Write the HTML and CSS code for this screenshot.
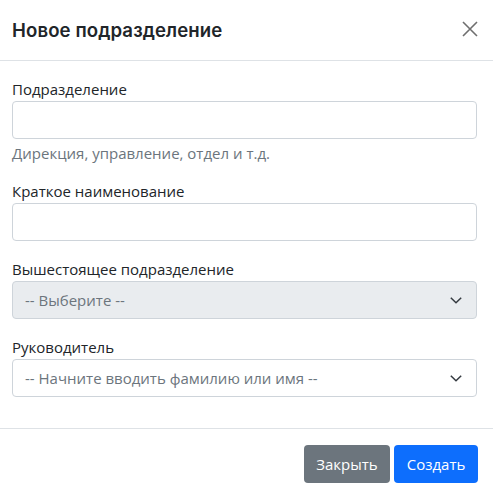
FILE: index.html
```html
<!DOCTYPE html>
<html lang="ru">
<head>
<meta charset="utf-8">
<title>Новое подразделение</title>
<link rel="stylesheet" href="styles.css">
</head>
<body>
<div class="modal">
  <div class="modal-header">
    <h5 class="modal-title">Новое подразделение</h5>
    <button class="btn-close" type="button" aria-label="Закрыть">
      <svg width="16" height="16" viewBox="0 0 16 16"><path d="M1 1L15 15M15 1L1 15" stroke="#6f6f6f" stroke-width="1.6" fill="none"/></svg>
    </button>
  </div>
  <div class="modal-body">
    <div class="group">
      <label class="label">Подразделение</label>
      <div class="control"></div>
      <div class="form-text">Дирекция, управление, отдел и т.д.</div>
    </div>
    <div class="group">
      <label class="label">Краткое наименование</label>
      <div class="control"></div>
    </div>
    <div class="group">
      <label class="label">Вышестоящее подразделение</label>
      <div class="control select disabled">
        <span class="placeholder">-- Выберите --</span>
        <svg class="chev" width="12" height="7" viewBox="0 0 12 7"><path d="M0.8 0.8L6 5.8L11.2 0.8" stroke="#343a40" stroke-width="1.5" fill="none"/></svg>
      </div>
    </div>
    <div class="group">
      <label class="label">Руководитель</label>
      <div class="control select">
        <span class="placeholder">-- Начните вводить фамилию или имя --</span>
        <svg class="chev" width="12" height="7" viewBox="0 0 12 7"><path d="M0.8 0.8L6 5.8L11.2 0.8" stroke="#343a40" stroke-width="1.5" fill="none"/></svg>
      </div>
    </div>
  </div>
  <div class="modal-footer">
    <button class="btn btn-secondary" type="button">Закрыть</button>
    <button class="btn btn-primary" type="button">Создать</button>
  </div>
</div>
</body>
</html>
```
FILE: styles.css
```css
* { box-sizing: border-box; }
html, body { margin: 0; padding: 0; background: #fff; }
body {
  font-family: "Open Sans", "Noto Sans", "Liberation Sans", sans-serif;
  color: #212529;
  font-size: 15px;
  line-height: 24px;
}
.modal {
  width: 493px;
  background: #fff;
}
.modal-header {
  height: 61px;
  border-bottom: 1px solid #dee2e6;
  display: flex;
  align-items: center;
  justify-content: space-between;
  padding: 0 15px 0 12px;
}
.modal-title {
  margin: 0;
  font-family: "Inter", "Noto Sans", sans-serif;
  font-size: 18.6px;
  font-weight: 600;
  line-height: 30px;
  color: #212529;
  letter-spacing: 0.1px;
}
.btn-close {
  border: 0;
  background: transparent;
  padding: 0;
  width: 16px;
  height: 16px;
  display: flex;
  margin-top: -3px;
}
.modal-body {
  padding: 16px 16px 0 12px;
  height: 368px;
  border-bottom: 1px solid #dee2e6;
}
.group { margin-bottom: 16px; }
.label {
  display: block;
  line-height: 24px;
}
.control {
  height: 38px;
  border: 1px solid #ced4da;
  border-radius: 4px;
  background: #fff;
}
.form-text {
  margin-top: 3px;
  font-size: 15px;
  line-height: 22px;
  color: #6c757d;
  margin-bottom: -1px;
}
.select {
  display: flex;
  align-items: center;
  justify-content: space-between;
  padding: 0 14px 0 12px;
  color: #6c757d;
}
.select.disabled { background: #e9ecef; }
.chev { display: block; margin-top: 1px; }
.modal-footer {
  display: flex;
  justify-content: flex-end;
  gap: 4px;
  padding: 16px 15px 0 0;
}
.btn {
  height: 38px;
  border: 0;
  border-radius: 4px;
  font-family: inherit;
  font-size: 15px;
  color: #fff;
  padding: 0 12px;
}
.btn-secondary { background: #6c757d; width: 86px; }
.btn-primary { background: #0d6efd; width: 84px; }
```
